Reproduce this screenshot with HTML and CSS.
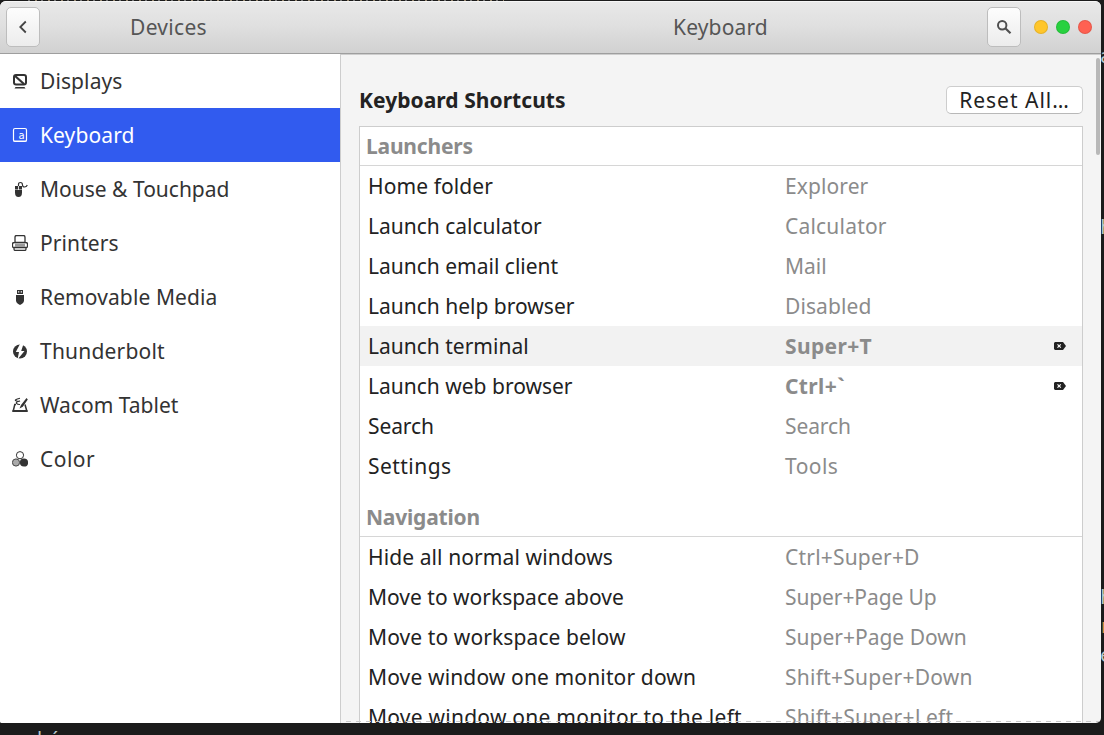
FILE: index.html
```html
<!DOCTYPE html>
<html lang="en">
<head>
<meta charset="utf-8">
<title>Keyboard</title>
<link rel="stylesheet" href="styles.css">
</head>
<body>
<div class="desktop">
  <div class="topline"></div>
  <span class="bg bg-a">a</span><span class="bg bg-b">h</span><span class="bg bg-c">h</span><span class="bg bg-d orange">r</span><span class="bg bg-e">e</span>
  <span class="bg bg-f">l &nbsp;´</span>
  <div class="window">
    <header class="bar">
      <div class="bar-left">
        <button class="hbtn" aria-label="Back"><svg width="16" height="16" viewBox="0 0 16 16"><path d="M10.800 2.500 5.300 8l5.500 5.500" fill="none" stroke="#444" stroke-width="1.800"/></svg></button>
        <h1 class="title devices">Devices</h1>
      </div>
      <div class="bar-right">
        <h1 class="title kb">Keyboard</h1>
        <button class="hbtn" aria-label="Search"><svg width="16" height="16" viewBox="0 0 16 16"><circle cx="6.200" cy="6.200" r="4.200" fill="none" stroke="#505050" stroke-width="2"/><path d="m9.300 9.300 5.200 5" stroke="#505050" stroke-width="2.200"/></svg></button>
        <div class="dots"><i class="dot yellow"></i><i class="dot green"></i><i class="dot red"></i></div>
      </div>
    </header>
    <div class="content">
      <nav class="side">
        <div class="item"><svg class="ico" viewBox="0 0 16 16"><rect x="2" y="2" width="12" height="9.500" rx="2" fill="none" stroke="#333" stroke-width="2"/><path d="M2.500 2.500 12 11" stroke="#333" stroke-width="2.200"/><path d="M2 2h4L2 5zM3.500 14h9l1 1.500h-11z"/></svg><span class="n1">Displays</span></div>
        <div class="item active"><svg class="ico" viewBox="0 0 16 16"><rect x="1.500" y="1.500" width="13" height="13" rx="1.500" fill="none" stroke="#fff" stroke-width="1.200"/><path d="M1.500 14h13" stroke="#fff"/><text class="key" x="6.500" y="12">a</text></svg><span class="n1">Keyboard</span></div>
        <div class="item"><svg class="ico" viewBox="0 0 16 16"><path d="M3 5h3.200v3.500H3zM7 5h3v3.500H7zM3 9h7v2.500Q10 16 6.500 16T3 11.500z"/><path d="M6.500 5V3.500Q6.500 1.500 8.500 1.500T10.500 4q0 2 2 2t2.800-2" fill="none" stroke="#333" stroke-width="1.200"/></svg><span>Mouse &amp; Touchpad</span></div>
        <div class="item"><svg class="ico" viewBox="0 0 16 16"><path d="M3 8V2.500q0-2 1.500-2h7q1.500 0 1.500 2V8M2.500 7.500h11q2 0 2 1.500v2.500q0 1-1 1h-13q-1 0-1-1V9q0-1.500 2-1.500zM2 13v1q0 1.500 1.500 1.500h9q1.500 0 1.500-1.500v-1" fill="none" stroke="#333" stroke-width="1.300"/><path d="M3 8.500h10V12H3z" fill="#999"/></svg><span class="n1">Printers</span></div>
        <div class="item"><svg class="ico" viewBox="0 0 16 16"><path fill-rule="evenodd" d="M5 1h6v4H5zM6 2.200v1.300h1.300V2.200zm2.700 0v1.300H10V2.200z"/><path d="M4 6h8v5.500q0 2.500-4 4.500-4-2-4-4.500z"/></svg><span class="n1">Removable Media</span></div>
        <div class="item"><svg class="ico" viewBox="0 0 16 16"><circle cx="8" cy="8.500" r="7"/><path d="M8.500 0 3.800 9H7l-1.500 7.500L12.500 8H9.200L11.500 1z" fill="#fff"/></svg><span class="n6">Thunderbolt</span></div>
        <div class="item"><svg class="ico" viewBox="0 0 16 16"><path d="M4 7.500H2.800L1.200 14h13.600L13 7.500" fill="none" stroke="#333" stroke-width="1.500"/><path d="M8 1.300Q1.500 2.800 4 3.800t4 .2Q3.500 5 4.500 6.300T8 7.500" fill="none" stroke="#333" stroke-width="1.100"/><path d="M.5 13h15v2H.5zM14.500 1 9 8 7.500 11.500 10.800 9.700 15.800 2.500z"/></svg><span>Wacom Tablet</span></div>
        <div class="item"><svg class="ico" viewBox="0 0 16 16"><circle cx="8" cy="4.200" r="3.600" fill="#fff" stroke="#333"/><circle cx="4" cy="11.500" r="3.600" fill="#aaa" stroke="#444"/><circle cx="12" cy="11.500" r="4.100"/></svg><span class="n8">Color</span></div>
      </nav>
      <main class="main">
        <div class="head"><h2 class="h2">Keyboard Shortcuts</h2><button class="reset">Reset All…</button></div>
        <section class="table">
          <h3 class="group">Launchers</h3>
          <div class="row"><span class="n1">Home folder</span><span class="val n1">Explorer</span></div>
          <div class="row"><span>Launch calculator</span><span class="val n6">Calculator</span></div>
          <div class="row"><span>Launch email client</span><span class="val">Mail</span></div>
          <div class="row"><span>Launch help browser</span><span class="val n1">Disabled</span></div>
          <div class="row hover"><span>Launch terminal</span><span class="val custom">Super+T</span><svg class="clear" viewBox="0 0 12 8"><path d="M1 0h8l3 4-3 4H1L0 7V1z"/><path d="m3.500 2.300 3.300 3.400m0-3.400L3.500 5.700" stroke="#fff" stroke-width="1.100"/></svg></div>
          <div class="row"><span>Launch web browser</span><span class="val custom">Ctrl+`</span><svg class="clear" viewBox="0 0 12 8"><path d="M1 0h8l3 4-3 4H1L0 7V1z"/><path d="m3.500 2.300 3.300 3.400m0-3.400L3.500 5.700" stroke="#fff" stroke-width="1.100"/></svg></div>
          <div class="row"><span class="tight">Search</span><span class="val tight">Search</span></div>
          <div class="row"><span class="n8">Settings</span><span class="val n8">Tools</span></div>
          <h3 class="group next">Navigation</h3>
          <div class="row"><span class="n1">Hide all normal windows</span><span class="val n6">Ctrl+Super+D</span></div>
          <div class="row"><span>Move to workspace above</span><span class="val tight">Super+Page Up</span></div>
          <div class="row"><span class="n1">Move to workspace below</span><span class="val">Super+Page Down</span></div>
          <div class="row"><span class="n2">Move window one monitor down</span><span class="val n7">Shift+Super+Down</span></div>
          <div class="row"><span class="n7">Move window one monitor to the left</span><span class="val n7">Shift+Super+Left</span></div>
        </section>
        <div class="scroll"></div>
        <div class="more"></div>
      </main>
    </div>
  </div>
</div>
</body>
</html>
```
FILE: styles.css
```css
* { box-sizing: border-box; }
body { margin: 0; font-family: "Noto Sans", "Open Sans", sans-serif; font-size: 21px; color: #222; }
h1, h2, h3 { margin: 0; }
.desktop { position: relative; width: 1104px; height: 735px; overflow: hidden; background: #1b1b1b; padding-top: 1px; }
.topline { position: absolute; left: 28px; top: 0; width: 476px; height: 1px; background: repeating-linear-gradient(90deg, #777 0 2px, #1b1b1b 2px 7px, #998a72 7px 9px, #1b1b1b 9px 13px); }
.bg { position: absolute; font: 20px/24px "DejaVu Sans Mono", monospace; color: #b9c7ca; white-space: nowrap; }
.bg-a { left: 1100px; top: 44px; }
.bg-b { left: 1100px; top: 215px; }
.bg-c { left: 1100px; top: 585px; }
.bg-d { left: 1099px; top: 614px; }
.bg-e { left: 1100px; top: 643px; }
.bg-f { left: 37px; top: 727px; font: 20px/24px "Noto Sans", sans-serif; }
.orange { color: #d38c43; }

.window { position: relative; width: 1101px; height: 722px; border-radius: 6px 6px 5px 2px; overflow: hidden; background: #f4f4f4; display: flex; flex-direction: column; }
.bar { height: 53px; flex: none; display: flex; border-bottom: 1px solid #9e9e9e; border-top: 1px solid #f6f6f6; background: linear-gradient(#e8e8e8, #e0e0e0 45%, #d1d1d1); }
.bar-left { width: 341px; display: flex; padding: 5px 0 0 6px; }
.bar-right { flex: 1; display: flex; padding-top: 5px; }
.title { font-size: 21px; font-weight: 400; line-height: 40px; color: #555; }
.devices { margin-left: 90px; letter-spacing: .3px; }
.kb { margin-left: 332px; width: 314px; letter-spacing: .15px; }
.hbtn { width: 34px; height: 40px; padding: 0; border: 1px solid #bdbdbd; border-radius: 5px; background: linear-gradient(#fdfdfd, #ececec); display: flex; align-items: center; justify-content: center; }
.dots { display: flex; gap: 8px; padding: 13px 0 0 13px; }
.dot { width: 14px; height: 14px; border-radius: 50%; box-shadow: inset 0 0 0 1px rgba(0, 0, 0, .1); }
.yellow { background: #ffc62b; }
.green { background: #28d13f; }
.red { background: #ff6152; }

.content { flex: 1; min-height: 0; display: flex; }
.side { width: 341px; flex: none; background: #fff; border-right: 1px solid #cdcdcd; }
.item { height: 54px; display: flex; align-items: center; gap: 12px; padding-left: 12px; color: #333; }
.item.active { background: #315bef; color: #fff; }
.ico { width: 16px; height: 16px; fill: #333; flex: none; }
.item span { line-height: 54px; }
.key { font: 10px "DejaVu Sans", sans-serif; fill: #fff; }
.n1 { letter-spacing: .1px; }
.n2 { letter-spacing: .14px; }
.n6 { letter-spacing: .2px; }
.n7 { letter-spacing: .25px; }
.n8 { letter-spacing: .45px; }
.tight { letter-spacing: -.1px; }

.main { flex: 1; position: relative; overflow: hidden; padding: 32px 18px 0; border-top: 1px solid #cdcdcd; }
.head { display: flex; justify-content: space-between; height: 39px; }
.h2 { font-size: 21px; line-height: 27px; font-weight: 700; letter-spacing: .05px; }
.reset { width: 137px; height: 28px; margin-top: -1px; padding: 0; font: 21px/25px "Noto Sans", sans-serif; letter-spacing: 1px; color: #222; background: #fff; border: 1px solid #cdcdcd; border-bottom-color: #b8b8b8; border-radius: 5px; }
.table { width: 724px; height: 640px; background: #fff; border: 1px solid #cdcdcd; }
.group { height: 39px; padding-left: 6px; font-size: 21px; line-height: 38px; letter-spacing: -.2px; color: #8b8b8b; border-bottom: 1px solid #d6d6d6; }
.group.next { height: 51px; padding-top: 12px; }
.row { display: grid; grid-template-columns: 417px 269px 12px; align-items: center; height: 40px; padding-left: 8px; line-height: 40px; white-space: nowrap; }
.row.hover { background: #f2f2f2; }
.val { color: #8b8b8b; }
.custom { font-weight: 700; letter-spacing: .35px; }
.clear { width: 12px; height: 8px; fill: #222; }
.scroll { position: absolute; right: 1px; top: 3px; width: 4px; height: 97px; border-radius: 2px; background: #b8b8b8; }
.more { position: absolute; left: 5px; right: 2px; bottom: 1px; height: 1px; background: repeating-linear-gradient(90deg, #c8c8c8 0 5px, transparent 5px 10px); }
```
